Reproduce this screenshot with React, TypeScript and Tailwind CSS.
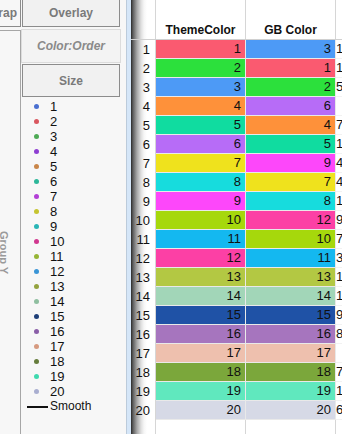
const themeColors = [
  "#FA5A70", "#2CE03C", "#4D9AF6", "#FE913A", "#10DCA0",
  "#B76CF7", "#EFE21D", "#17DCDD", "#FD47FA", "#A6D80C",
  "#14B8F0", "#FC40A5", "#B3C843", "#A2D6B8", "#1F52A6",
  "#A675BE", "#EEC0AE", "#7BA73B", "#60E8BE", "#D6D9E6",
];

// GB Color column holds these values, coloured by value
const gbValues = [3, 1, 2, 6, 4, 5, 9, 7, 8, 12, 10, 11, 13, 14, 15, 16, 17, 18, 19, 20];

// third column is cut off by the window, only first digit shows
const thirdCol = ["1", "1", "5", "", "7", "1", "4", "4", "1", "9", "7", "3", "1", "1", "9", "8", "", "7", "1", "6"];

const legendColors = [
  "#4A6FD0", "#D9575F", "#4EAA55", "#8E3FD2", "#C9864A",
  "#2DB799", "#B23FD6", "#C5C430", "#2AB5B5", "#D1388F",
  "#96B535", "#3A95D6", "#94A33F", "#8FBFA0", "#1E3F78",
  "#8A5EA8", "#D69A80", "#667D3C", "#3FD9AE", "#A9AED0",
];

const rowHead =
  "flex w-[25px] shrink-0 items-center justify-end border-r border-[#d6d6d6] pr-[5px] bg-[linear-gradient(to_right,#2a2a2a_0px,#5e5e5e_2px,#a8a8a8_6px,#dedede_10px,#f6f6f6_13px,#ffffff_16px)]";

export default function App() {
  return (
    <div className="flex h-[434px] w-[342px] overflow-hidden bg-white font-['Liberation_Sans',Arial,sans-serif] text-[13px] text-[#111]">
      {/* left drop zone strip */}
      <div className="flex w-[21px] shrink-0 flex-col bg-[#f7f7f7]">
        <div className="-mt-px flex h-[28px] shrink-0 items-center justify-end border-b border-r border-[#8c8c8c] pr-[3px] text-[12px] font-bold text-[#7a7a7a]">
          rap
        </div>
        <div className="mt-[3px] flex flex-1 items-start border-r border-t border-[#a6a6a6]">
          <span className="ml-[-2px] mt-[200px] text-[11px] font-bold leading-[12px] text-[#9a9a9a] [writing-mode:vertical-rl]">
            Group Y
          </span>
        </div>
      </div>

      {/* legend panel */}
      <div className="flex w-[105px] shrink-0 flex-col bg-[#f7f7f7]">
        <div className="-mt-px ml-px flex h-[28px] w-[98px] shrink-0 items-center justify-center border border-[#8c8c8c] bg-[#f1f1f1] text-[12px] font-bold text-[#7a7a7a]">
          Overlay
        </div>
        <div className="mt-[2px] flex h-[34px] w-[100px] shrink-0 items-center justify-center border border-[#dcdcdc] bg-[#f3f3f3] text-[12px] font-bold italic text-[#8a8a8a]">
          Color:Order
        </div>
        <div className="ml-px mt-px flex h-[33px] w-[98px] shrink-0 items-center justify-center border border-[#8c8c8c] bg-[#f1f1f1] text-[12px] font-bold text-[#7a7a7a]">
          Size
        </div>
        <div className="mt-[2px] flex flex-col">
          {legendColors.map((c, i) => (
            <div key={i} className="flex h-[15px] items-center">
              <span className="ml-[13px] h-[5px] w-[5px] rounded-full" style={{ backgroundColor: c }} />
              <span className="ml-[11px] leading-[15px]">{i + 1}</span>
            </div>
          ))}
          <div className="flex h-[15px] items-center">
            <span className="ml-[6px] h-[2px] w-[21px] bg-[#111]" />
            <span className="ml-[2px] text-[12px] leading-[15px]">Smooth</span>
          </div>
        </div>
      </div>

      {/* splitter */}
      <div className="w-[5px] shrink-0 border-l border-[#bccbdb] bg-[#d5e6f8]" />

      {/* data grid */}
      <div className="flex flex-1 flex-col overflow-hidden">
        <div className="flex h-[40px] shrink-0 border-b border-[#d0d0d0]">
          <div className={rowHead} />
          <div className="flex w-[90px] shrink-0 items-end justify-center border-r border-[#d6d6d6] pb-[2px] text-[12px] font-bold leading-[14px]">
            ThemeColor
          </div>
          <div className="flex w-[90px] shrink-0 items-end justify-center border-r border-[#d6d6d6] pb-[2px] text-[12px] font-bold leading-[14px]">
            GB Color
          </div>
          <div className="flex-1" />
        </div>

        {themeColors.map((c, i) => {
          const gb = gbValues[i];
          return (
            <div key={i} className="flex h-[19px] shrink-0">
              <div className={rowHead}>{i + 1}</div>
              <div
                className="flex w-[90px] shrink-0 items-center justify-end border-b border-r border-[#e9e9e9] pr-[4px]"
                style={{ backgroundColor: c }}
              >
                {i + 1}
              </div>
              <div
                className="flex w-[90px] shrink-0 items-center justify-end border-b border-r border-[#e9e9e9] pr-[4px]"
                style={{ backgroundColor: themeColors[gb - 1] }}
              >
                {gb}
              </div>
              <div className="flex flex-1 items-center border-b border-[#f2f2f2] whitespace-nowrap">
                {thirdCol[i]}
              </div>
            </div>
          );
        })}

        <div className="flex flex-1">
          <div className={rowHead} />
          <div className="w-[90px] shrink-0 border-r border-[#d6d6d6]" />
          <div className="w-[90px] shrink-0 border-r border-[#d6d6d6]" />
          <div className="flex-1" />
        </div>
      </div>
    </div>
  );
}
